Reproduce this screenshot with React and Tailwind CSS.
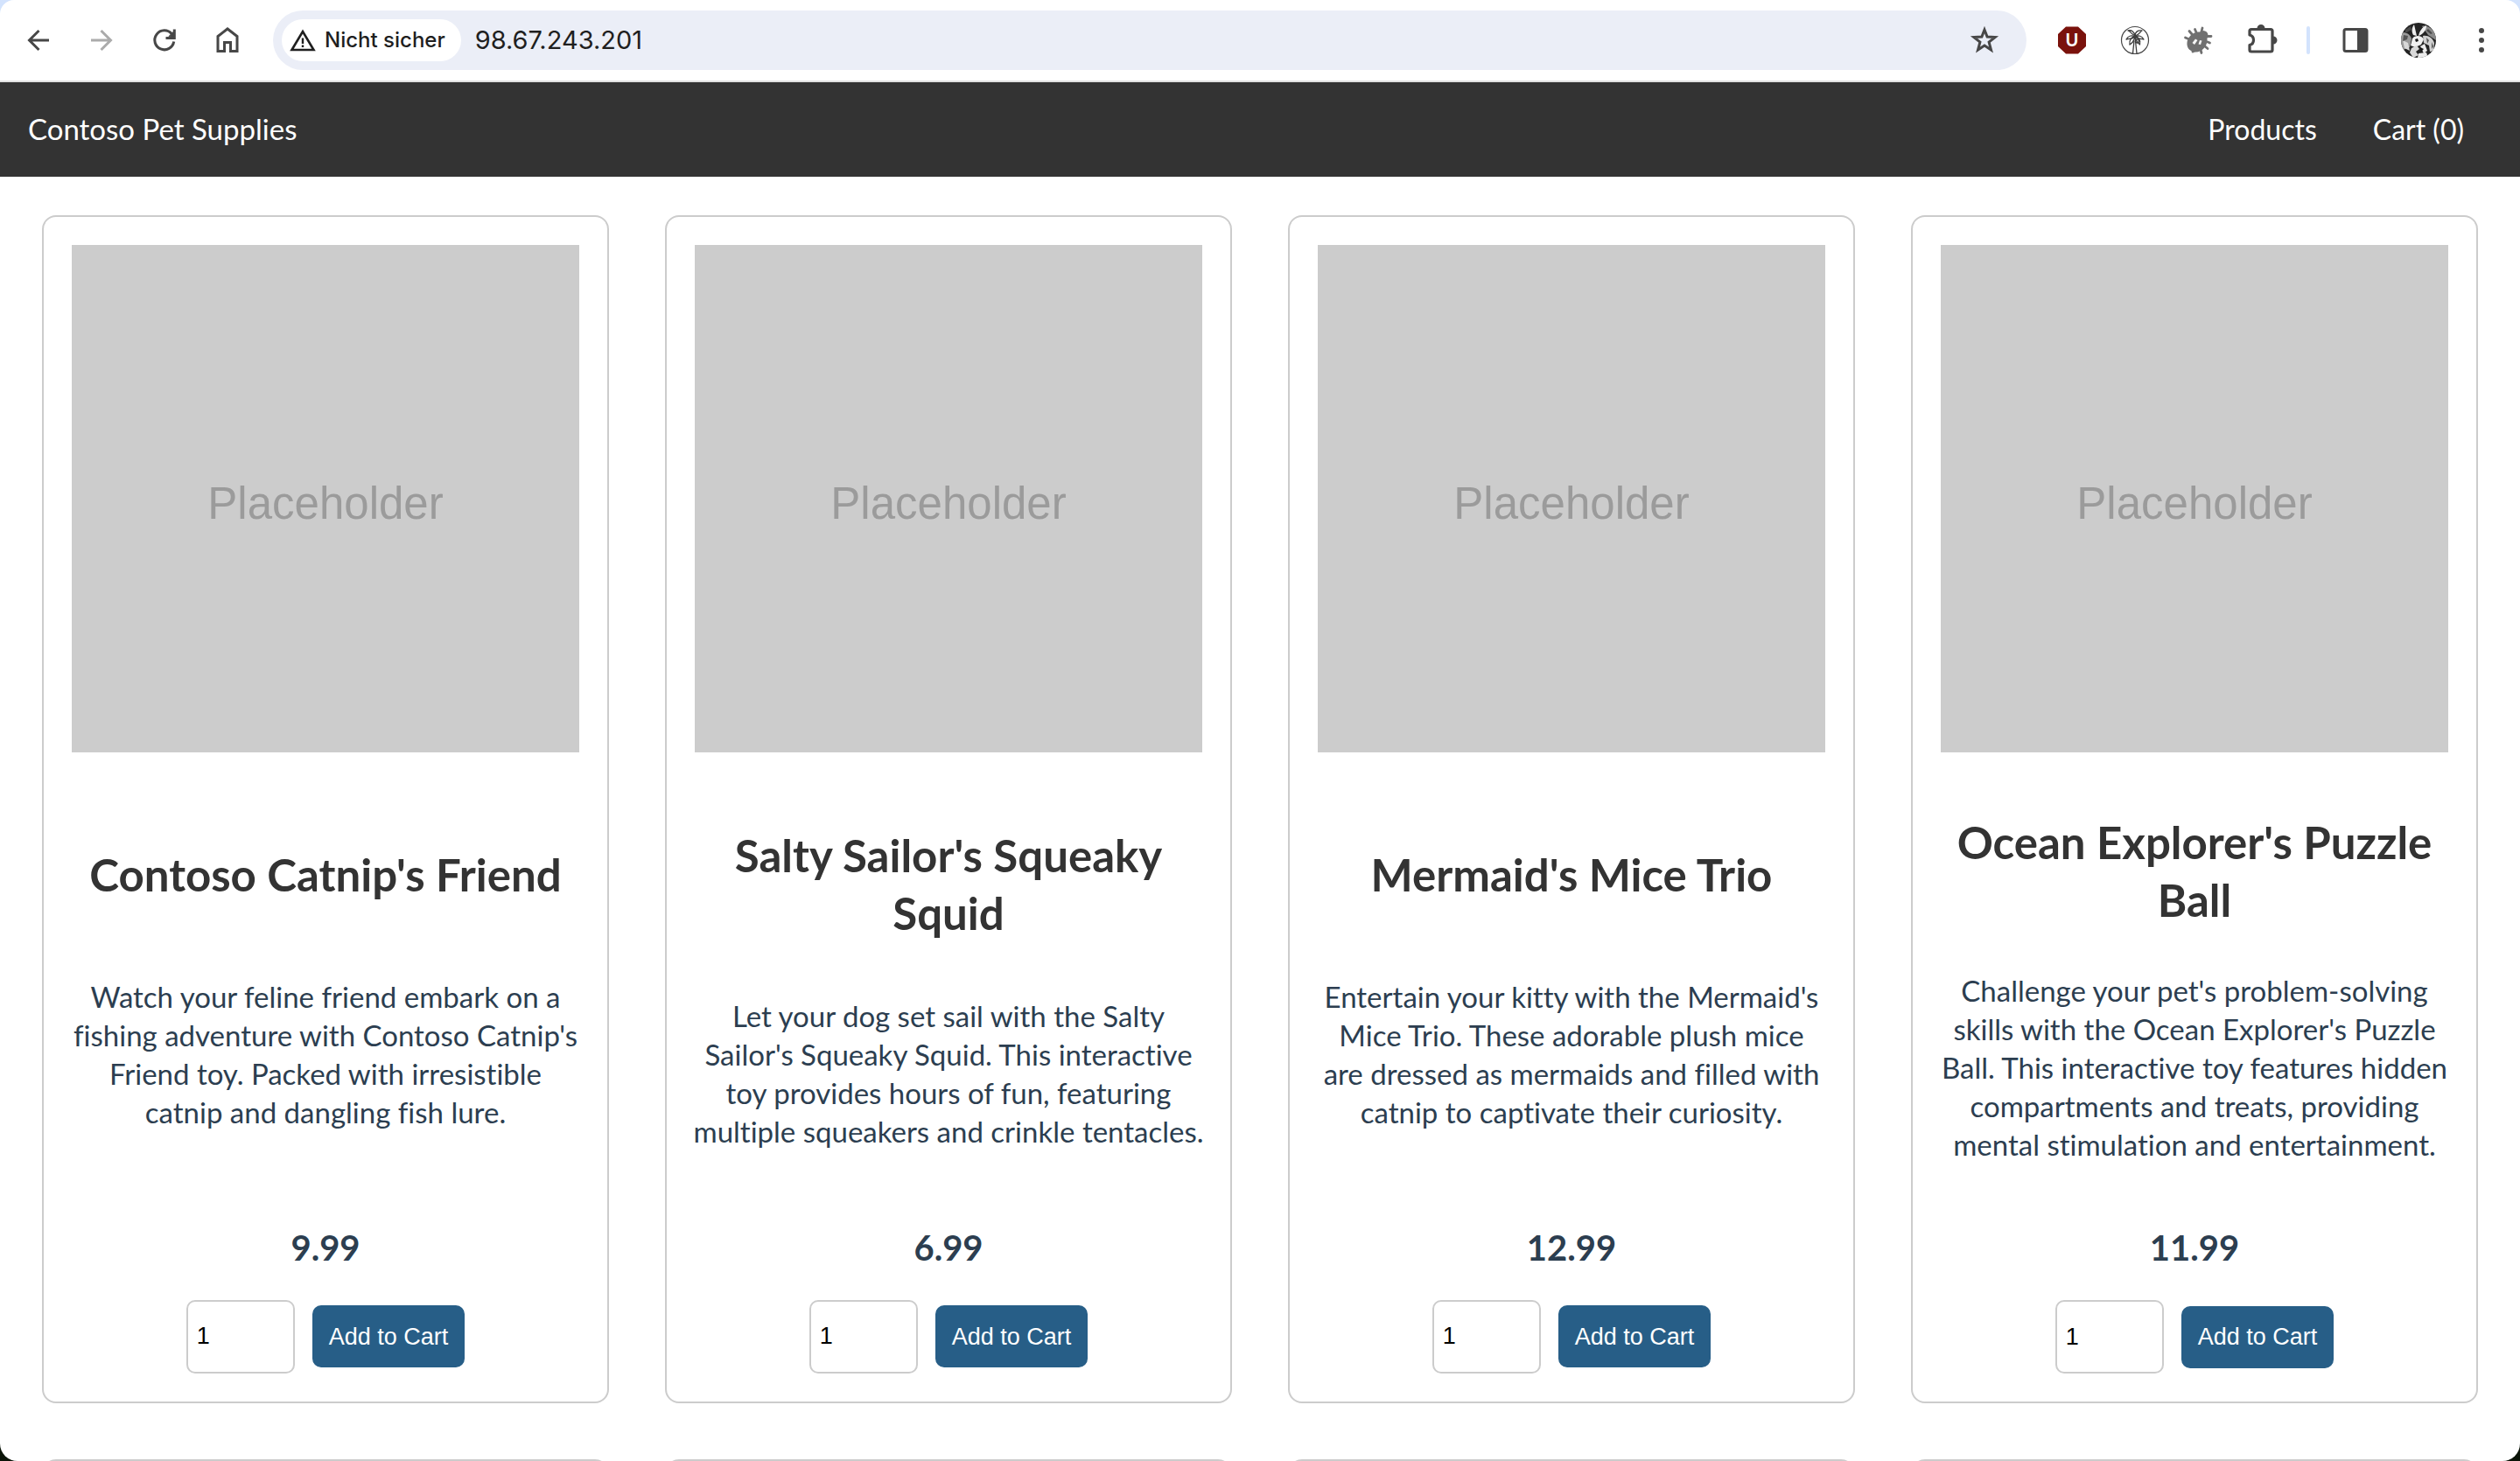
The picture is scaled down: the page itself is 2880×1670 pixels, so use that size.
const products = [
  {
    name: "Contoso Catnip's Friend",
    description:
      "Watch your feline friend embark on a fishing adventure with Contoso Catnip's Friend toy. Packed with irresistible catnip and dangling fish lure.",
    price: "9.99",
  },
  {
    name: "Salty Sailor's Squeaky Squid",
    description:
      "Let your dog set sail with the Salty Sailor's Squeaky Squid. This interactive toy provides hours of fun, featuring multiple squeakers and crinkle tentacles.",
    price: "6.99",
  },
  {
    name: "Mermaid's Mice Trio",
    description:
      "Entertain your kitty with the Mermaid's Mice Trio. These adorable plush mice are\u00a0dressed as mermaids and filled with catnip to captivate their curiosity.",
    price: "12.99",
  },
  {
    name: "Ocean Explorer's Puzzle Ball",
    description:
      "Challenge your pet's problem-solving skills with the Ocean Explorer's Puzzle Ball. This interactive toy features hidden compartments and treats, providing mental stimulation and entertainment.",
    price: "11.99",
  },
];

/* Toolbar drawings use a 40x40 grid. */
function Icon({ children }) {
  return (
    <svg viewBox="0 0 40 40" className="size-10" fill="none" aria-hidden="true">
      {children}
    </svg>
  );
}

function BackIcon() {
  return (
    <Icon>
      <path d="M32 20H10M20.500 9 9.500 20l11 11" stroke="#474747" strokeWidth="3" />
    </Icon>
  );
}

function ForwardIcon() {
  return (
    <Icon>
      <path d="M8 20h22M19.500 9l11 11-11 11" stroke="#ababab" strokeWidth="3" />
    </Icon>
  );
}

function ReloadIcon() {
  return (
    <Icon>
      <path d="M30.700 21.500A11 11 0 1 1 28.300 12.800" stroke="#474747" strokeWidth="3" />
      <path d="M31.300 7.500v10H21.500" stroke="#474747" strokeWidth="3" />
      <path d="m25 15.500 5-5v6z" fill="#474747" stroke="#474747" />
    </Icon>
  );
}

function HomeIcon() {
  return (
    <Icon>
      <path
        d="M9 32.500V15.500L20 7l11 8.500v17h-7.500V22.500h-7v10z"
        stroke="#474747"
        strokeWidth="3"
      />
    </Icon>
  );
}

function WarningIcon() {
  return (
    <svg viewBox="0 0 30 26" className="h-[26px] w-[30px]" fill="none" aria-hidden="true">
      <path d="M2.500 24 15 3l12.500 21z" stroke="#1f1f1f" strokeWidth="2.600" />
      <path d="M15 10.500v6.500M15 18.500v2.500" stroke="#1f1f1f" strokeWidth="2.400" />
    </svg>
  );
}

function StarIcon() {
  return (
    <Icon>
      <path
        d="m20 8 3.100 8.100 9 .5-7 5.500 2.400 8.900L20 26l-7.500 5 2.400-8.900-7-5.500 9-.5z"
        stroke="#474747"
        strokeWidth="3"
      />
    </Icon>
  );
}

function ShieldIcon() {
  return (
    <Icon>
      <path d="M13 4.500h14L36 13v14l-9 8.500H13L4 27V13z" fill="#7a120c" />
      <text
        x="20"
        y="27"
        textAnchor="middle"
        fill="#fff"
        fontSize="20"
        fontWeight="700"
        fontFamily="Lato, sans-serif"
      >
        U
      </text>
    </Icon>
  );
}

function PalmIcon() {
  return (
    <Icon>
      <circle cx="20" cy="20" r="15.500" stroke="#474747" strokeWidth="1.200" />
      <g stroke="#3c3c3c" strokeWidth="1.300" strokeLinejoin="round">
        <path d="M20 15c-1-5-4-7-8-6 3 1 4 4 8 6zM20 15c0-4 3-7 8-6-2 1-3 5-8 6z" />
        <path d="M20 16c-4-2-8-1-10 3 4-1 7 0 10-3zM20 16c4-2 8-1 10 3-4-1-7 0-10-3z" />
        <path d="M20 16c-4 0-7 4-6 9 3-2 5-4 6-9zM20 16c4 0 7 4 5.500 9-2-2-5-4-5.500-9z" />
        <path d="M19 20.500 17.500 35M20.500 20.500 22 35" />
        <circle cx="22.500" cy="21" r="2" />
      </g>
    </Icon>
  );
}

function BugIcon() {
  return (
    <Icon>
      <g stroke="#707070" strokeWidth="2.800" strokeLinecap="round">
        <path d="M9 18.500 5.500 17M13 13l-3-3.500M18 11l-1.500-3.500M24 10l1-4M30 15.500h5M31 22l2.500 1M28 27l3 2.500M23 31l1 3.500M16 32l-2 1" />
      </g>
      <ellipse cx="19" cy="22" rx="12.500" ry="10.500" fill="#707070" transform="rotate(-45 19 22)" />
      <circle cx="26" cy="14.500" r="5.500" fill="#707070" />
      <path d="m13.500 23 3.500-4.500 2.500 1.500-3.500 5zM20.500 24.500l1.500-4.500 2.500.5-1.500 4.500z" fill="#f6f6f6" />
    </Icon>
  );
}

function PuzzleIcon() {
  return (
    <Icon>
      <path
        d="M9 7.500h22a2 2 0 0 1 2 2v21.500a2 2 0 0 1-2 2H9a2 2 0 0 1-2-2v-5.500c6-1.500 6-10 0-11.500V9.500a2 2 0 0 1 2-2z"
        stroke="#474747"
        strokeWidth="3.200"
        strokeLinejoin="round"
      />
      <path d="M15.500 6.500a4.500 4.500 0 0 1 9 0zM34 15.500a4.500 4.500 0 0 1 0 9z" fill="#474747" />
    </Icon>
  );
}

function SidePanelIcon() {
  return (
    <Icon>
      <rect x="7" y="7.500" width="26" height="25" rx="2" stroke="#474747" strokeWidth="3" />
      <path d="M22 7h10.500v26H22z" fill="#474747" />
    </Icon>
  );
}

function AvatarIcon() {
  return (
    <Icon>
      <defs>
        <clipPath id="avatar-circle">
          <circle cx="20" cy="20" r="20" />
        </clipPath>
      </defs>
      <g clipPath="url(#avatar-circle)">
        <path d="M0 0h40v40H0z" fill="#242424" />
        <path d="M0 12c5-2 10 1 12 6l-2 10-10 4z" fill="#9b9b9b" />
        <path d="M24 4c6-2 12 3 16 9v7l-9-6z" fill="#8a8a8a" />
        <path d="m15 2 3 13-4-1c-2-4-2-8 1-12zM29 3c0 6-4 10-9 12 1-5 4-10 9-12z" fill="#efefef" />
        <path d="M13 18c4-5 11-3 13 1l-3 6-7 3-5-2z" fill="#f1f1f1" />
        <path d="M25 15c6-1 11 2 13 8l-1 9-4 1-1-7-6-3z" fill="#d0d0d0" />
        <path d="m2 20 6 3 2 9-6-3zM12 29l6-3 3 4-4 3 3 4-6 3-4-6z" fill="#d9d9d9" />
        <path d="m22 27 5-3 3 8-4 3zM20 35l9-1 2 6H19z" fill="#ececec" />
        <path d="m3 14 5 1-1 4-5 2zM29 17l3 3-2 4zM35 22l2 5-2 3z" fill="#555" />
        <path d="m16 19 3-1 1 3-3 1zM22 28l4 2-3 3z" fill="#161616" />
        <path d="m31 7 5 5-2 1-5-4zM5 8l6-4 1 4-7 4z" fill="#4a4a4a" />
      </g>
    </Icon>
  );
}

function MenuIcon() {
  return (
    <Icon>
      <g fill="#474747">
        <circle cx="20" cy="9" r="3" />
        <circle cx="20" cy="20" r="3" />
        <circle cx="20" cy="31" r="3" />
      </g>
    </Icon>
  );
}

function ToolButton({ label, disabled, children }) {
  return (
    <button type="button" aria-label={label} disabled={disabled} className="shrink-0">
      {children}
    </button>
  );
}

function BrowserToolbar() {
  return (
    <div className="bg-[#d3e3fd]">
      <div className="flex items-center gap-8 rounded-t-2xl border-b-2 border-[#e1e1e1] bg-white px-6 py-3 font-[Inter,sans-serif] text-[#1f1f1f]">
        <ToolButton label="Back"><BackIcon /></ToolButton>
        <ToolButton label="Forward" disabled><ForwardIcon /></ToolButton>
        <ToolButton label="Reload"><ReloadIcon /></ToolButton>
        <ToolButton label="Home"><HomeIcon /></ToolButton>
        <div className="flex h-[68px] flex-1 items-center rounded-full bg-[#ebeef7] pr-7 pl-[10px]">
          <button
            type="button"
            className="flex h-12 shrink-0 items-center gap-[10px] rounded-full bg-white pr-[18px] pl-[9px] text-2xl font-medium"
          >
            <WarningIcon />
            Nicht sicher
          </button>
          <input
            type="text"
            aria-label="Address"
            defaultValue="98.67.243.201"
            className="ml-4 min-w-0 flex-1 bg-transparent text-[29px] outline-none"
          />
          <ToolButton label="Bookmark"><StarIcon /></ToolButton>
        </div>
        <ToolButton label="Ad blocker"><ShieldIcon /></ToolButton>
        <ToolButton label="Palm extension"><PalmIcon /></ToolButton>
        <ToolButton label="Bug extension"><BugIcon /></ToolButton>
        <ToolButton label="Extensions"><PuzzleIcon /></ToolButton>
        <div className="h-8 w-1 rounded-full bg-[#d3e3fd]" />
        <ToolButton label="Side panel"><SidePanelIcon /></ToolButton>
        <ToolButton label="Profile"><AvatarIcon /></ToolButton>
        <ToolButton label="Menu"><MenuIcon /></ToolButton>
      </div>
    </div>
  );
}

function SiteNav() {
  return (
    <nav className="flex h-[108px] shrink-0 items-center justify-between bg-[#333] pr-8 text-[33px] text-white">
      <a href="#home" className="px-8">Contoso Pet Supplies</a>
      <div className="flex text-[32px]">
        <a href="#products" className="px-8">Products</a>
        <a href="#cart" className="px-8">Cart (0)</a>
      </div>
    </nav>
  );
}

function ProductCard({ name, description, price }) {
  return (
    <article className="flex flex-col justify-between rounded-2xl border-2 border-[#ccc] p-8 text-center text-[#2c3e50]">
      <div
        role="img"
        aria-label={name}
        className="flex aspect-square items-center justify-center bg-[#ccc] pt-3 font-[Liberation_Sans,sans-serif] text-[51px] text-[#9b9b9b]"
      >
        Placeholder
      </div>
      <h2 className="mt-[70px] text-[51px] leading-[66px] font-bold text-[#333]">{name}</h2>
      <p className="-mx-1 mt-12 text-[33px] leading-[44px]">{description}</p>
      <div className="mt-[69px]">
        <p className="text-[40px] leading-[54px] font-bold">{price}</p>
        <div className="mt-[33px] flex items-center justify-center gap-5 font-[Liberation_Sans,sans-serif] text-[27px]">
          <input
            type="text"
            inputMode="numeric"
            aria-label={`Quantity of ${name}`}
            defaultValue="1"
            className="h-[84px] w-[124px] rounded-[10px] border-2 border-[#ccc] px-[10px] text-black"
          />
          <button type="button" className="h-[71px] rounded-[10px] bg-[#275e87] px-[19px] text-white">
            Add to Cart
          </button>
        </div>
      </div>
    </article>
  );
}

export default function App() {
  return (
    <div className="flex h-screen flex-col overflow-hidden bg-[#0b1408] font-[Lato,sans-serif] [font-variant-ligatures:none]">
      <BrowserToolbar />
      <SiteNav />
      <main className="grid min-h-0 flex-1 auto-rows-max grid-cols-4 gap-16 overflow-hidden rounded-b-[20px] bg-white px-12 pt-11">
        {products.map((product) => (
          <ProductCard key={product.name} {...product} />
        ))}
        {products.map((product) => (
          <div key={product.name} aria-hidden="true" className="h-40 rounded-2xl border-2 border-[#ccc]" />
        ))}
      </main>
    </div>
  );
}
